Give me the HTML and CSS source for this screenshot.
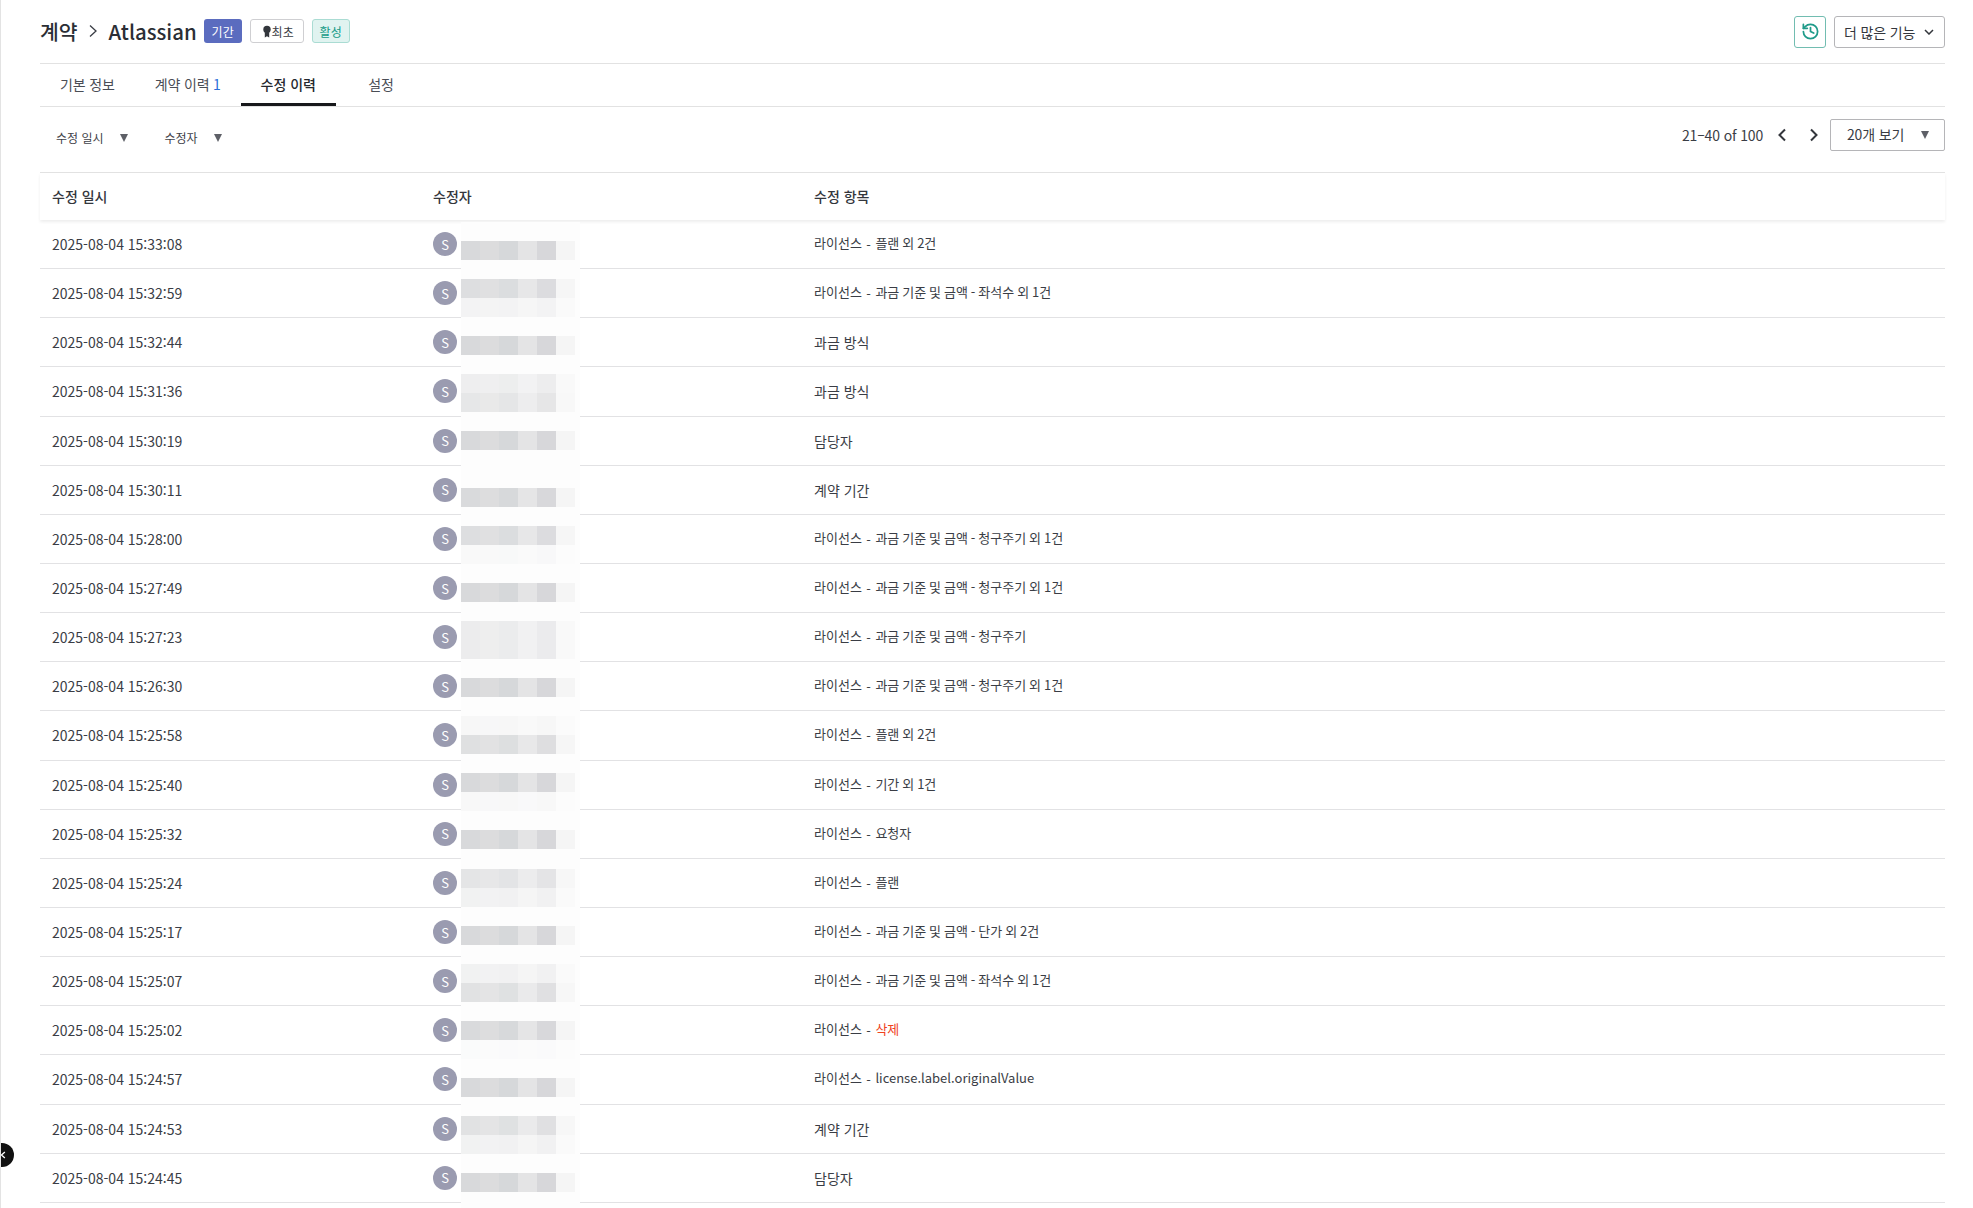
FILE: index.html
```html
<!DOCTYPE html>
<html lang="ko">
<head>
<meta charset="utf-8">
<title>Atlassian 계약 수정 이력</title>
<link rel="stylesheet" href="styles.css">
</head>
<body>
<div class="app">
  <main class="main">
    <header class="page-head">
      <div class="crumbs">
        <span class="crumb">계약</span>
        <svg class="crumb-sep" viewBox="0 0 12 14" width="12" height="14"><path d="M3 1.500 9 7l-6 5.500" fill="none" stroke="#3a3d45" stroke-width="1.300"/></svg>
        <span class="crumb">Atlassian</span>
        <span class="chip chip-period">기간</span>
        <span class="chip chip-first">
          <svg viewBox="0 0 10 13" width="10" height="13"><circle cx="5" cy="4.500" r="3.700" fill="#33363c"/><path d="M2.800 7.500v5l2.200-1.300 2.200 1.300v-5z" fill="#33363c"/></svg>최초
        </span>
        <span class="chip chip-active">활성</span>
      </div>
      <div class="head-actions">
        <button class="btn-icon">
          <svg viewBox="0 0 24 24" width="19" height="19" fill="none" stroke="#1f9b8a" stroke-width="2.200" stroke-linecap="round" stroke-linejoin="round"><path d="M3 12a9 9 0 1 0 9-9 9.750 9.750 0 0 0-6.740 2.740L3 8"/><path d="M3 3v5h5"/><path d="M12 7v5l4 2"/></svg>
        </button>
        <button class="btn-more"><span>더 많은 기능</span>
          <svg viewBox="0 0 10 6" width="10" height="6"><path d="M1 1l4 4 4-4" fill="none" stroke="#33363c" stroke-width="1.500"/></svg>
        </button>
      </div>
    </header>

    <nav class="tabs">
      <a class="tab">기본 정보</a>
      <a class="tab">계약 이력 <span class="count">1</span></a>
      <a class="tab tab-on">수정 이력</a>
      <a class="tab">설정</a>
    </nav>

    <section class="toolbar">
      <div class="filters">
        <span class="filter filter-date">수정 일시<i class="tri"></i></span>
        <span class="filter filter-user">수정자<i class="tri"></i></span>
      </div>
      <div class="pager">
        <span class="range">21–40 of 100</span>
        <svg class="chev" viewBox="0 0 10 14" width="10" height="14"><path d="M8 1.500 2.500 7 8 12.500" fill="none" stroke="#33363c" stroke-width="2"/></svg>
        <svg class="chev chev-next" viewBox="0 0 10 14" width="10" height="14"><path d="M2 1.500 7.500 7 2 12.500" fill="none" stroke="#33363c" stroke-width="2"/></svg>
        <span class="select"><span class="select-label">20개 보기</span><i class="tri tri-lg"></i></span>
      </div>
    </section>

    <section class="table">
      <div class="thead">
        <span>수정 일시</span><span>수정자</span><span>수정 항목</span>
      </div>
      <div class="row"><span>2025-08-04 15:33:08</span><span class="avatar">S</span><span class="item lic">라이선스<b class="sep">-</b>플랜 외 2건</span></div>
      <div class="row"><span>2025-08-04 15:32:59</span><span class="avatar">S</span><span class="item lic">라이선스<b class="sep">-</b>과금 기준 및 금액 - 좌석수 외 1건</span></div>
      <div class="row"><span>2025-08-04 15:32:44</span><span class="avatar">S</span><span class="item">과금 방식</span></div>
      <div class="row"><span>2025-08-04 15:31:36</span><span class="avatar">S</span><span class="item">과금 방식</span></div>
      <div class="row"><span>2025-08-04 15:30:19</span><span class="avatar">S</span><span class="item">담당자</span></div>
      <div class="row"><span>2025-08-04 15:30:11</span><span class="avatar">S</span><span class="item">계약 기간</span></div>
      <div class="row"><span>2025-08-04 15:28:00</span><span class="avatar">S</span><span class="item lic">라이선스<b class="sep">-</b>과금 기준 및 금액 - 청구주기 외 1건</span></div>
      <div class="row"><span>2025-08-04 15:27:49</span><span class="avatar">S</span><span class="item lic">라이선스<b class="sep">-</b>과금 기준 및 금액 - 청구주기 외 1건</span></div>
      <div class="row"><span>2025-08-04 15:27:23</span><span class="avatar">S</span><span class="item lic">라이선스<b class="sep">-</b>과금 기준 및 금액 - 청구주기</span></div>
      <div class="row"><span>2025-08-04 15:26:30</span><span class="avatar">S</span><span class="item lic">라이선스<b class="sep">-</b>과금 기준 및 금액 - 청구주기 외 1건</span></div>
      <div class="row"><span>2025-08-04 15:25:58</span><span class="avatar">S</span><span class="item lic">라이선스<b class="sep">-</b>플랜 외 2건</span></div>
      <div class="row"><span>2025-08-04 15:25:40</span><span class="avatar">S</span><span class="item lic">라이선스<b class="sep">-</b>기간 외 1건</span></div>
      <div class="row"><span>2025-08-04 15:25:32</span><span class="avatar">S</span><span class="item lic">라이선스<b class="sep">-</b>요청자</span></div>
      <div class="row"><span>2025-08-04 15:25:24</span><span class="avatar">S</span><span class="item lic">라이선스<b class="sep">-</b>플랜</span></div>
      <div class="row"><span>2025-08-04 15:25:17</span><span class="avatar">S</span><span class="item lic">라이선스<b class="sep">-</b>과금 기준 및 금액 - 단가 외 2건</span></div>
      <div class="row"><span>2025-08-04 15:25:07</span><span class="avatar">S</span><span class="item lic">라이선스<b class="sep">-</b>과금 기준 및 금액 - 좌석수 외 1건</span></div>
      <div class="row"><span>2025-08-04 15:25:02</span><span class="avatar">S</span><span class="item lic">라이선스<b class="sep">-</b><em class="del">삭제</em></span></div>
      <div class="row"><span>2025-08-04 15:24:57</span><span class="avatar">S</span><span class="item lic">라이선스<b class="sep">-</b>license.label.originalValue</span></div>
      <div class="row"><span>2025-08-04 15:24:53</span><span class="avatar">S</span><span class="item">계약 기간</span></div>
      <div class="row"><span>2025-08-04 15:24:45</span><span class="avatar">S</span><span class="item">담당자</span></div>

      <svg class="mosaic" width="119" height="987" viewBox="0 221 119 987">
        <defs>
          <g id="band">
            <rect x="0" width="19" height="19" fill="#d8d9db"/>
            <rect x="19" width="19" height="19" fill="#dcdcdd"/>
            <rect x="38" width="19" height="19" fill="#d6d8da"/>
            <rect x="57" width="19" height="19" fill="#e4e4e5"/>
            <rect x="76" width="19" height="19" fill="#d7d7da"/>
            <rect x="95" width="19" height="19" fill="#f5f5f5"/>
          </g>
        </defs>
        <rect y="221" width="119" height="987" fill="#fdfdfd"/>
        <use href="#band" y="240"/>
        <use href="#band" y="278" opacity=".85"/>
        <use href="#band" y="297" opacity=".25"/>
        <use href="#band" y="335"/>
        <use href="#band" y="373" opacity=".4"/>
        <use href="#band" y="392" opacity=".6"/>
        <use href="#band" y="430"/>
        <use href="#band" y="487" opacity=".95"/>
        <use href="#band" y="525" opacity=".85"/>
        <use href="#band" y="544" opacity=".1"/>
        <use href="#band" y="582"/>
        <use href="#band" y="620" opacity=".45"/>
        <use href="#band" y="639" opacity=".45"/>
        <use href="#band" y="677"/>
        <use href="#band" y="715" opacity=".15"/>
        <use href="#band" y="734" opacity=".8"/>
        <use href="#band" y="772"/>
        <use href="#band" y="791" opacity=".12"/>
        <use href="#band" y="829"/>
        <use href="#band" y="868" opacity=".65"/>
        <use href="#band" y="887" opacity=".3"/>
        <use href="#band" y="925"/>
        <use href="#band" y="963" opacity=".3"/>
        <use href="#band" y="982" opacity=".75"/>
        <use href="#band" y="1020" opacity=".95"/>
        <use href="#band" y="1039" opacity=".05"/>
        <use href="#band" y="1077"/>
        <use href="#band" y="1115" opacity=".75"/>
        <use href="#band" y="1134" opacity=".3"/>
        <use href="#band" y="1172"/>
      </svg>
    </section>
  </main>
  <button class="side-toggle">
    <svg viewBox="0 0 8 10" width="6" height="8"><path d="M6.500 1 2 5l4.500 4" fill="none" stroke="#fff" stroke-width="1.700"/></svg>
  </button>
</div>
</body>
</html>
```

FILE: styles.css
```css
* { box-sizing: border-box; }
html, body { margin: 0; height: 100%; overflow: hidden; background: #fff; }
body {
  font-family: "Noto Sans CJK KR", "Noto Sans", sans-serif;
  font-size: 14px;
  color: #33363c;
}
.app { height: 1208px; border-left: 1px solid #e3e3e3; position: relative; overflow: hidden; }
.main { padding: 0 28px 0 39px; }

.page-head {
  height: 64px;
  border-bottom: 1px solid #e2e2e2;
  display: flex;
  align-items: center;
  justify-content: space-between;
}
.crumbs { display: flex; align-items: center; margin-top: -1px; }
.crumb { font-size: 20.400px; font-weight: 500; color: #2b2e35; line-height: 28px; }
.crumb-sep { margin: 0 10px 0 9px; }
.chip {
  height: 24px;
  border-radius: 3px;
  font-size: 12px;
  display: inline-flex;
  align-items: center;
  justify-content: center;
  border: 1px solid transparent;
}
.chip-period { width: 38px; margin-left: 7px; background: #5b6cbf; color: #fff; }
.chip-first { width: 54px; margin-left: 8px; background: #fff; border-color: #cfcfd2; color: #3a3d45; padding-left: 2px; }
.chip-active { width: 38px; margin-left: 8px; background: #e0f3f0; border-color: #aadcd3; color: #149a86; }

.head-actions { display: flex; gap: 8px; }
.btn-icon, .btn-more {
  height: 32px;
  background: #fff;
  border-radius: 3px;
  font: inherit;
  display: flex;
  align-items: center;
  padding: 0;
}
.btn-icon { width: 32px; justify-content: center; border: 1px solid #72bdb1; }
.btn-more {
  width: 111px;
  border: 1px solid #b5b5b8;
  padding: 0 10px 0 9px;
  justify-content: space-between;
  color: #33363c;
  letter-spacing: -.15px;
}

.tabs { display: flex; height: 43px; border-bottom: 1px solid #e2e2e2; }
.tab {
  min-width: 90px;
  padding: 0 20px 3px;
  display: flex;
  align-items: center;
  justify-content: center;
  gap: 3.500px;
  color: #4a4d55;
  height: 42px;
  letter-spacing: -.15px;
}
.count { color: #2b6fd8; }
.tab-on { color: #25272d; font-weight: 500; border-bottom: 3px solid #17181b; padding-bottom: 0; letter-spacing: 0; }

.toolbar {
  height: 65px;
  display: flex;
  justify-content: space-between;
  align-items: flex-start;
}
.filters { display: flex; padding: 21px 0 0 16px; }
.filter { font-size: 12px; color: #3f4249; display: flex; align-items: center; line-height: 20px; }
.filter-user { margin-left: 37px; }
.tri {
  width: 0;
  height: 0;
  border-left: 4px solid transparent;
  border-right: 4px solid transparent;
  border-top: 8px solid #5e6067;
  margin-left: 16px;
}
.pager { display: flex; align-items: center; padding-top: 12px; height: 43px; }
.range { color: #3a3d45; letter-spacing: -.15px; }
.chev { margin-left: 14px; }
.chev-next { margin-left: 22px; }
.select {
  margin-left: 11px;
  width: 115px;
  height: 32px;
  border: 1px solid #b5b5b8;
  border-radius: 2px;
  display: flex;
  align-items: center;
  justify-content: space-between;
  padding: 0 15px 0 16px;
  color: #3a3d45;
}
.select-label { margin-top: -2px; letter-spacing: -.15px; }
.tri-lg { margin-left: 0; }

.table { position: relative; border-top: 1px solid #e2e2e2; }
.thead, .row {
  display: grid;
  grid-template-columns: 381px 381px 1fr;
  align-items: center;
  padding-left: 12px;
}
.thead {
  height: 47px;
  padding-bottom: 2px;
  font-weight: 500;
  color: #33363c;
  box-shadow: 0 2px 3px rgba(0, 0, 0, .07);
  position: relative;
}
.row { height: 49.150px; border-bottom: 1px solid #e2e2e4; color: #3a3d45; }
.avatar {
  width: 24px;
  height: 24px;
  border-radius: 50%;
  background: #9a9bb0;
  color: #fff;
  font-size: 13px;
  display: flex;
  align-items: center;
  justify-content: center;
}
.item { color: #3a3d45; }
.lic { font-size: 13px; margin-top: -3px; word-spacing: -.7px; }
.sep { font-weight: 400; margin: 0 4.500px; vertical-align: -2px; line-height: 1; }
.del { font-style: normal; color: #f0421c; }

.mosaic { position: absolute; left: 421px; top: 49px; }

.side-toggle {
  position: absolute;
  left: -11px;
  top: 1143px;
  width: 24px;
  height: 24px;
  border: 0;
  padding: 0;
  border-radius: 50%;
  background: #111;
  display: flex;
  align-items: center;
  justify-content: center;
}
.side-toggle svg { margin-left: 2px; }
```
